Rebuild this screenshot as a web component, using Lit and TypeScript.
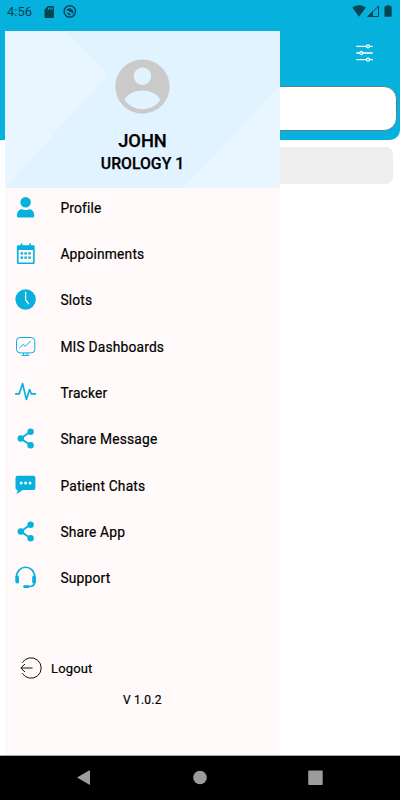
import { LitElement, html, svg, css } from "lit";
import { customElement } from "lit/decorators.js";

const icons = {
  profile: svg`<circle cx="12" cy="6.2" r="5.2"/><path d="M3.300 19.800c0-4 2.200-6.600 5-6.600 1.200 0 2 .8 3.700.8s2.500-.8 3.700-.8c2.800 0 5 2.600 5 6.600 0 1.200-.7 1.800-1.700 1.800H5c-1 0-1.700-.6-1.700-1.800z"/>`,
  calendar: svg`<path fill-rule="evenodd" d="M4.500 3.300h2.700V1.500h1.700v1.800h6.600V1.500h1.700v1.800h2.700a1.200 1.200 0 0 1 1.200 1.200v16.300a1.200 1.200 0 0 1-1.200 1.200H4.500a1.200 1.200 0 0 1-1.200-1.200V4.500a1.200 1.200 0 0 1 1.200-1.200zM5 8.100v12.400h14.500V8.100z"/><path d="M7 10.300h2.500v2.200H7zm3.800 0h2.500v2.200h-2.500zm3.900 0h2.500v2.200h-2.500zM7 14.500h2.500v2.200H7zm3.800 0h2.500v2.200h-2.500zm3.900 0h2.500v2.200h-2.500z"/>`,
  clock: svg`<circle cx="12" cy="11.500" r="10.200"/><path d="M12 3.800V12l3.300 4" fill="none" stroke="#fff" stroke-width="1.300"/>`,
  dashboard: svg`<g fill="none" stroke="currentColor" stroke-width="1"><rect x="2.900" y="2.500" width="18.300" height="15.400" rx="3.600"/><path d="M5.800 13l4-3.600 1.600 2 5.800-5.300M10 18v2m3.500-2v2M8 20.400h7.800"/></g>`,
  tracker: svg`<path d="M1.500 12.800h4.200L9 2.600l3.800 15.900 3.200-10 1.700 4.300h4.700" fill="none" stroke="currentColor" stroke-width="1.700" stroke-linejoin="round"/>`,
  share: svg`<path d="M17 4.500L7.200 11.500l9.800 6.800" fill="none" stroke="currentColor" stroke-width="2"/><circle cx="17" cy="4.800" r="3.200"/><circle cx="7.200" cy="11.500" r="3.200"/><circle cx="17" cy="18.300" r="3.200"/>`,
  chat: svg`<path d="M3.900 1.700h15.900a2 2 0 0 1 2 2v10.400a2 2 0 0 1-2 2H9L3 20.300l1.200-4.200h-.3a2 2 0 0 1-2-2V3.700a2 2 0 0 1 2-2z"/><g fill="#fff"><circle cx="7.600" cy="8.900" r="1.500"/><circle cx="12" cy="8.900" r="1.500"/><circle cx="16.400" cy="8.900" r="1.500"/></g>`,
  support: svg`<path d="M2.800 11.500C2.800-2.200 21.200-2.200 21.200 11.500V15.500q0 5-5.500 5H11" fill="none" stroke="currentColor" stroke-width="1.700"/><path d="M1.700 11q0-1.500 1.800-1.500t1.900 1.500v5.300q0 1.300-1.600 1.300-2.100 0-2.100-2zM22.300 11q0-1.500-1.800-1.500t-1.900 1.500v5.300q0 1.300 1.600 1.300 2.100 0 2.100-2z"/><rect x="9.600" y="19.300" width="6" height="2.600" rx="1.200"/>`,
};

const menu = [
  { icon: icons.profile, label: "Profile" },
  { icon: icons.calendar, label: "Appoinments" },
  { icon: icons.clock, label: "Slots" },
  { icon: icons.dashboard, label: "MIS Dashboards" },
  { icon: icons.tracker, label: "Tracker" },
  { icon: icons.share, label: "Share Message" },
  { icon: icons.chat, label: "Patient Chats" },
  { icon: icons.share, label: "Share App" },
  { icon: icons.support, label: "Support" },
];

@customElement("nav-drawer")
class NavDrawer extends LitElement {
  static styles = css`
    :host { display: flex; flex-direction: column; background: #fffaf9; color: #000; }
    svg { display: block; flex: none; }
    .head { position: relative; height: 157px; flex: none; background: #e1f3ff; display: flex; flex-direction: column; align-items: center; }
    .pattern { position: absolute; inset: 0; }
    .avatar { position: relative; margin-top: 23px; fill: #cacaca; }
    .name, .dept { position: relative; font-weight: 500; -webkit-text-stroke: .25px #000; white-space: pre; }
    .name { font-size: 18.300px; line-height: 22px; margin-top: 11px; }
    .dept { font-size: 15.800px; line-height: 20px; margin-top: 2px; }
    .menu { display: flex; flex-direction: column; margin-top: -3.400px; }
    .row { height: 46.300px; display: flex; align-items: center; padding-left: 8.500px; font-size: 13.800px; letter-spacing: .18px; }
    .row span, .logout span, .version { -webkit-text-stroke: .2px #000; }
    .row svg { fill: currentColor; color: #06b1dd; }
    .row span { margin-left: 22.900px; white-space: pre; }
    .logout { display: flex; align-items: center; height: 28px; margin-top: 53px; padding-left: 12.500px; font-size: 13px; letter-spacing: .15px; }
    .logout span { margin-left: 5.500px; padding-top: 1px; }
    .version { margin: 8.500px 0 0 118px; font-size: 12px; line-height: 18px; letter-spacing: .2px; }
  `;
  render() {
    return html`
      <div class="head">
        <svg class="pattern" width="275" height="157"><path d="M0 0H61L97 36q7 7 0 14L0 157zM275 54V157H179z" fill="#eaf6ff"/></svg>
        <svg class="avatar" width="65" height="65" viewBox="0 0 24 24"><path d="M12 2C6.480 2 2 6.480 2 12s4.480 10 10 10 10-4.480 10-10S17.520 2 12 2zm0 3c1.750 0 3.200 1.450 3.200 3.200S13.750 11.400 12 11.400 8.800 9.950 8.800 8.200 10.250 5 12 5zm0 15.400c-2.900 0-5.200-1.400-6.600-3.500.8-2.200 4.300-3.400 6.600-3.400s5.800 1.200 6.600 3.400c-1.400 2.100-3.700 3.500-6.600 3.500z"/></svg>
        <div class="name">JOHN</div>
        <div class="dept">UROLOGY 1</div>
      </div>
      <div class="menu">
        ${menu.map((m) => html`<div class="row"><svg width="24" height="24" viewBox="0.4 0 24 24">${m.icon}</svg><span>${m.label}</span></div>`)}
      </div>
      <div class="logout">
        <svg width="28" height="28" viewBox="0 0 28 28" fill="none" stroke="#111" stroke-width="1"><path d="M4.300 8.700A10.200 10.200 0 1 1 4.300 19.300M14.500 14H3M7 10L2.800 14 7 18"/></svg>
        <span>Logout</span>
      </div>
      <div class="version">V 1.0.2</div>
    `;
  }
}

@customElement("app-root")
class AppRoot extends LitElement {
  static styles = css`
    :host { display: flex; flex-direction: column; position: relative; width: 400px; height: 800px; overflow: hidden; background: #fff; font-family: Roboto, sans-serif; }
    svg { display: block; flex: none; }
    .top { height: 139.500px; flex: none; background: #06b1dd; border-radius: 0 0 10px 0; }
    .status { height: 24px; display: flex; align-items: center; padding: 0 7px; color: #044553; fill: currentColor; }
    .time { font-size: 13px; width: 36px; line-height: 24px; }
    .spacer { flex: 1; }
    .bar { height: 62px; display: flex; align-items: center; justify-content: flex-end; padding-right: 27px; box-sizing: border-box; }
    .bar svg { margin-top: -4px; }
    .search { height: 45px; box-sizing: border-box; margin: -0.500px 3.500px 0 10px; background: #fff; border: 1px solid #58848f; border-radius: 13px; }
    .chip { height: 37px; margin: 7.500px 7px 0 10px; background: #eee; border-radius: 7px; flex: none; }
    .page { flex: 1; }
    .nav { height: 45px; flex: none; background: #000; border-top: 1px solid #aaa; box-sizing: border-box; }
    .nav svg { fill: #9c9c9c; }
    nav-drawer { position: absolute; left: 5px; top: 31px; width: 275px; height: 724px; }
  `;
  render() {
    return html`
      <div class="top">
        <div class="status">
          <span class="time">4:56</span>
          <svg width="12" height="14" viewBox="0 0 12 14"><path fill-rule="evenodd" d="M5 1h5.200q.8 0 .8.800v10.400q0 .8-.8.800H2.300q-.8 0-.8-.8V4.500zM5 2.500v2.200h1V2.500zm1.800 0v2.200h1V2.500zm1.800 0v2.200h1V2.500z"/></svg>
          <svg width="28" height="16" viewBox="0 0 28 16"><circle cx="14.800" cy="7.400" r="5.700" fill="none" stroke="currentColor" stroke-width="1.400"/><path d="M11 6.300q3.300-4.300 7 0l.6 4.200-2.300-2.200q-2.500-.2-3.300-1.700z"/><path d="M11.300 8.500q2 3 5 2.800l-1.800-2z"/></svg>
          <div class="spacer"></div>
          <svg width="46" height="16" viewBox="0 0 46 16"><path d="M5.300 3.500q6.800-4.500 13.600 0L12 12.700zM38 2.300h1.700V1.200h3V2.300h1.500q.5 0 .5.500v9.500q0 .5-.5.500H38q-.5 0-.5-.5V2.800q0-.5.500-.5z"/><path d="M21 12.500L31.500 2V12.500z" fill="none" stroke="currentColor"/><path d="M20 13l6-6v6z"/></svg>
        </div>
        <div class="bar">
          <svg width="17" height="20" viewBox="0 0 17 20" fill="#06b1dd" stroke="#fff" stroke-width="1.300"><path d="M.3 3.300H16.700M.3 10H16.700M.3 16.700H16.700"/><circle cx="12" cy="3.300" r="1.500"/><circle cx="5.300" cy="10" r="1.500"/><circle cx="12" cy="16.700" r="1.500"/></svg>
        </div>
        <div class="search"></div>
      </div>
      <div class="chip"></div>
      <div class="page"></div>
      <div class="nav"><svg width="400" height="44" viewBox="0 0 400 44"><path d="M77 21.500L89.500 14.300Q90 14 90 14.600V28.500Q90 29.200 89.500 28.800z"/><circle cx="200" cy="21.500" r="6.800"/><rect x="308.200" y="14.500" width="14.500" height="14.500" rx="1"/></svg></div>
      <nav-drawer></nav-drawer>
    `;
  }
}
